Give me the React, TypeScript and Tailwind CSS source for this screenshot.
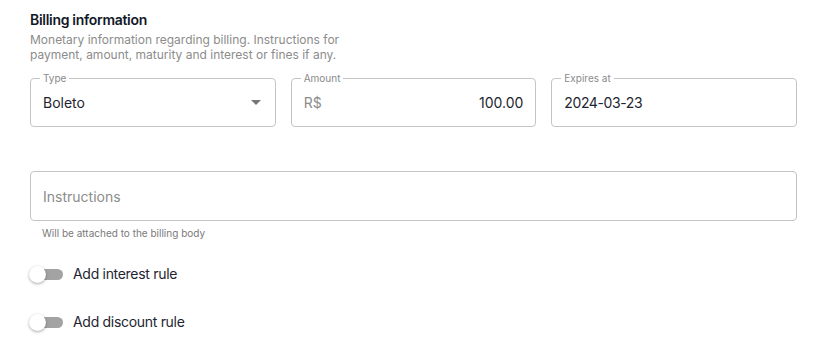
import { useState } from "react";

const font = { fontFamily: "Inter, 'Noto Sans', sans-serif" };

function Outlined({
  label,
  children,
}: {
  label: string;
  children: React.ReactNode;
}) {
  return (
    <fieldset className="h-[56px] -mt-[7px] rounded-[4px] border border-[#c4c4c4] px-[12px] pb-0 m-0 min-w-0">
      <legend className="-ml-[3px] px-[3px] text-[10px] leading-[14px] text-[#8a8a8a]">
        {label}
      </legend>
      <div className="flex h-[34px] items-center">{children}</div>
    </fieldset>
  );
}

function Toggle({ label }: { label: string }) {
  const [on, setOn] = useState(false);
  return (
    <button
      onClick={() => setOn(!on)}
      className="flex items-center gap-[10px] text-left"
    >
      <span className="relative ml-[27px] block h-[16px] w-[34px]">
        <span className="absolute left-[6px] top-[3px] h-[11px] w-[28px] rounded-full bg-[#a3a3a3]" />
        <span
          className={`absolute top-0 h-[17px] w-[17px] rounded-full bg-white shadow-[0_1px_3px_rgba(0,0,0,0.35)] ${
            on ? "left-[17px]" : "left-0"
          }`}
        />
      </span>
      <span className="text-[14px] tracking-[-0.3px] text-[#1e2530]">
        {label}
      </span>
    </button>
  );
}

export default function App() {
  return (
    <div
      className="min-h-screen w-[829px] bg-white pl-[30px] pr-[32px] pt-[11px]"
      style={font}
    >
      <h2 className="text-[14px] font-semibold leading-[18px] tracking-[-0.3px] text-[#111827]">
        Billing information
      </h2>
      <p className="mt-[3px] w-[320px] text-[12px] leading-[15px] text-[#8c8c8c]">
        Monetary information regarding billing. Instructions for payment,
        amount, maturity and interest or fines if any.
      </p>

      <div className="mt-[16px] grid grid-cols-3 gap-x-[15px]">
        <Outlined label="Type">
          <span className="flex-1 text-[14px] text-[#1e2530]">Boleto</span>
          <svg width="10" height="5" viewBox="0 0 10 5" className="mr-[2px]">
            <path d="M0 0h10L5 5z" fill="#757575" />
          </svg>
        </Outlined>
        <Outlined label="Amount">
          <span className="text-[14px] text-[#8c8c8c]">R$</span>
          <span className="flex-1 text-right text-[14px] text-[#1e2530]">
            100.00
          </span>
        </Outlined>
        <Outlined label="Expires at">
          <span className="text-[14px] tracking-[-0.4px] text-[#1e2530]">
            2024-03-23
          </span>
        </Outlined>
      </div>

      <div className="mt-[44px] flex h-[50px] items-center rounded-[4px] border border-[#c4c4c4] px-[12px]">
        <span className="text-[14px] text-[#8c8c8c]">Instructions</span>
      </div>
      <p className="ml-[12px] mt-[6px] text-[10px] leading-[12px] text-[#7a7a7a]">
        Will be attached to the billing body
      </p>

      <div className="-ml-[28px] mt-[24px] flex flex-col gap-[27px]">
        <Toggle label="Add interest rule" />
        <Toggle label="Add discount rule" />
      </div>
    </div>
  );
}
